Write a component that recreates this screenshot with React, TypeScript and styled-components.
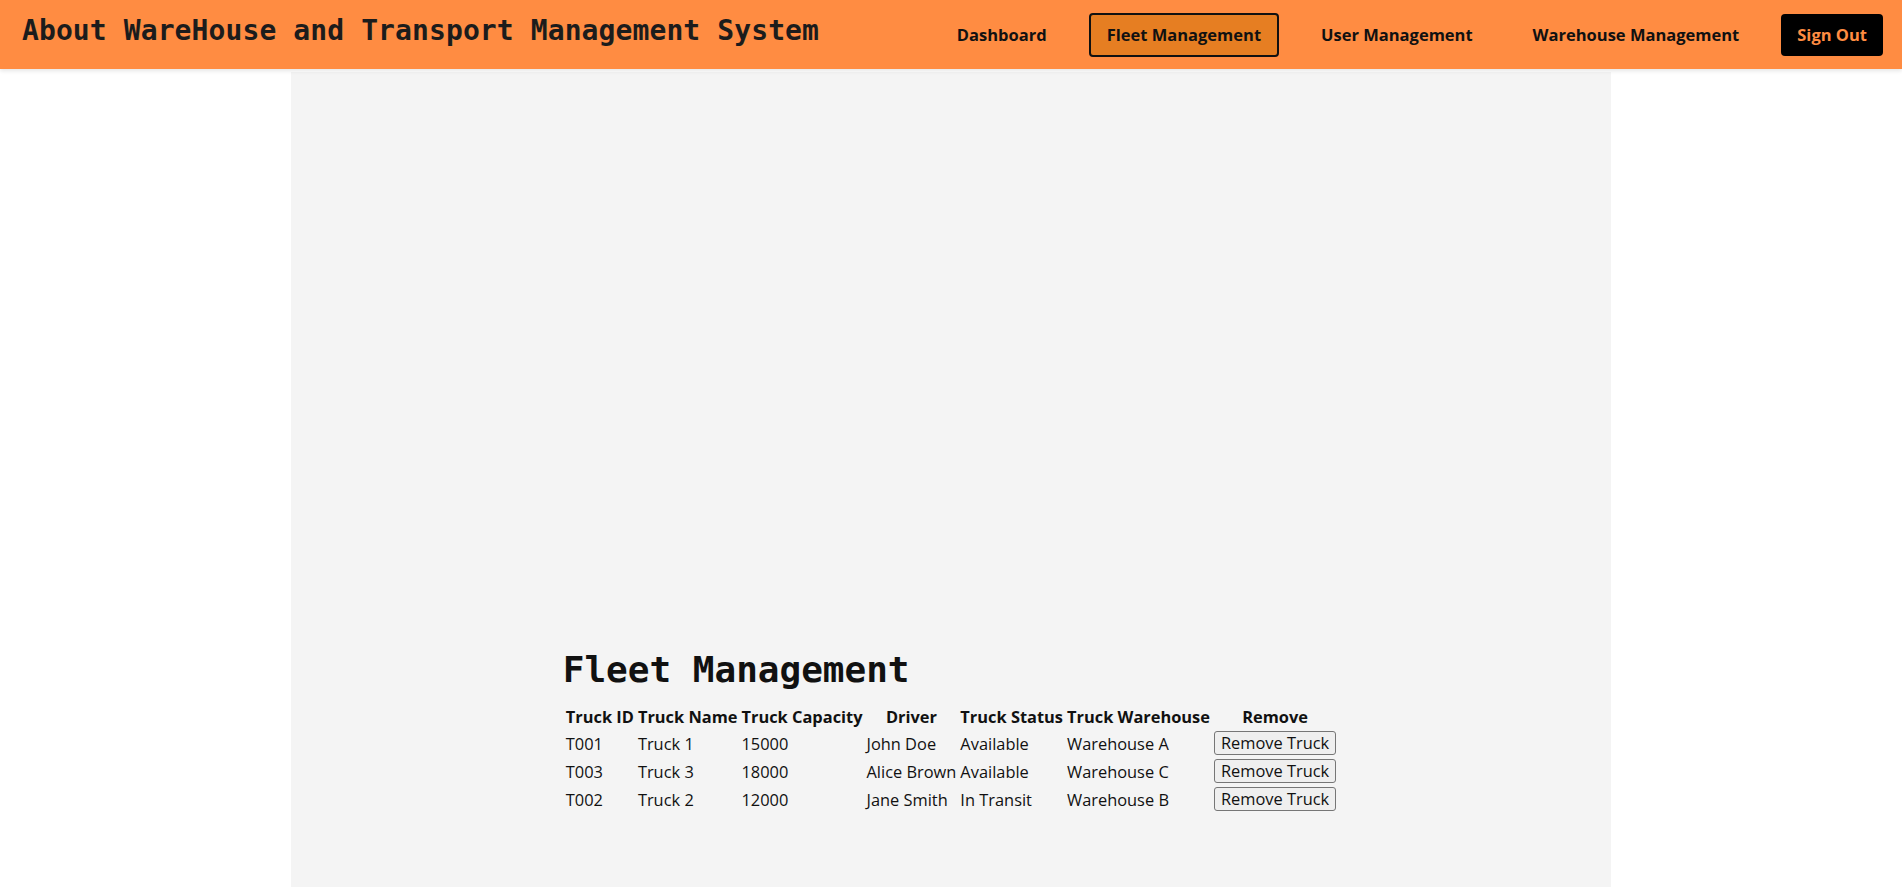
import React from 'react'
import styled, { createGlobalStyle } from 'styled-components'

const GlobalStyle = createGlobalStyle`
  body {
    margin: 0;
    background: #ffffff;
    font-family: "Open Sans", "Noto Sans", sans-serif;
    color: #111;
  }
`

const Header = styled("header")`
  height: 69px;
  display: flex;
  align-items: center;
  justify-content: space-between;
  padding: 0 19px 0 22px;
  background: #ff8c42;
  box-shadow: 0 2px 4px rgba(0, 0, 0, 0.1);
  position: relative;
  z-index: 1;
`

const Brand = styled("h1")`
  margin: 0 0 9px;
  font-family: "DejaVu Sans Mono", monospace;
  font-size: 28px;
  letter-spacing: 0.1px;
  font-weight: bold;
  color: #1c1c1c;
`

const Nav = styled("nav")`
  display: flex;
  align-items: center;
  gap: 24px;
`

const NavLink = styled("a")<{ $active?: boolean }>`
  padding: 9px 16px;
  border: 2px solid ${p => (p.$active ? '#111' : 'transparent')};
  border-radius: 4px;
  background: ${p => (p.$active ? '#e67e22' : 'transparent')};
  font-size: 16.5px;
  line-height: 22px;
  font-weight: 700;
  color: #111;
  text-decoration: none;
  cursor: pointer;
`

const SignOut = styled("button")`
  padding: 10px 16px;
  border: none;
  border-radius: 4px;
  background: #000;
  color: #ff8c42;
  font-family: inherit;
  font-size: 16.5px;
  line-height: 22px;
  font-weight: 700;
  cursor: pointer;
`

const Panel = styled("main")`
  width: 1320px;
  min-height: 815px;
  margin: 3px auto 0;
  padding-top: 577px;
  box-sizing: border-box;
  background: #f4f4f4;
`

const Content = styled("section")`
  width: fit-content;
  margin: 0 auto;
`

const Heading = styled("h2")`
  margin: 0 0 13px;
  font-family: "DejaVu Sans Mono", monospace;
  font-size: 36px;
  font-weight: bold;
  color: #111;
`

const Table = styled("table")`
  font-size: 16.4px;
  line-height: 21px;
  border-spacing: 2px;
`

const Th = styled("th")`
  padding: 1px;
  font-weight: 700;
`

const Td = styled("td")`
  padding: 1px;
  white-space: nowrap;
`

const RemoveButton = styled("button")`
  padding: 1px 6px;
  border: 1px solid #767676;
  border-radius: 3px;
  background: #efefef;
  font-family: inherit;
  font-size: 16.4px;
  line-height: 20px;
  color: #111;
  cursor: pointer;
`

const trucks = [
  { id: 'T001', name: 'Truck 1', capacity: 15000, driver: 'John Doe', status: 'Available', warehouse: 'Warehouse A' },
  { id: 'T003', name: 'Truck 3', capacity: 18000, driver: 'Alice Brown', status: 'Available', warehouse: 'Warehouse C' },
  { id: 'T002', name: 'Truck 2', capacity: 12000, driver: 'Jane Smith', status: 'In Transit', warehouse: 'Warehouse B' },
]

const links = ['Dashboard', 'Fleet Management', 'User Management', 'Warehouse Management']

export default function App() {
  return (
    <>
      <GlobalStyle />
      <Header>
        <Brand>About WareHouse and Transport Management System</Brand>
        <Nav>
          {links.map(l => (
            <NavLink key={l} $active={l === 'Fleet Management'}>{l}</NavLink>
          ))}
          <SignOut>Sign Out</SignOut>
        </Nav>
      </Header>

      <Panel>
        <Content>
          <Heading>Fleet Management</Heading>
          <Table>
            <thead>
              <tr>
                <Th>Truck ID</Th>
                <Th>Truck Name</Th>
                <Th>Truck Capacity</Th>
                <Th>Driver</Th>
                <Th>Truck Status</Th>
                <Th>Truck Warehouse</Th>
                <Th>Remove</Th>
              </tr>
            </thead>
            <tbody>
              {trucks.map(t => (
                <tr key={t.id}>
                  <Td>{t.id}</Td>
                  <Td>{t.name}</Td>
                  <Td>{t.capacity}</Td>
                  <Td>{t.driver}</Td>
                  <Td>{t.status}</Td>
                  <Td>{t.warehouse}</Td>
                  <Td><RemoveButton>Remove Truck</RemoveButton></Td>
                </tr>
              ))}
            </tbody>
          </Table>
        </Content>
      </Panel>
    </>
  )
}
